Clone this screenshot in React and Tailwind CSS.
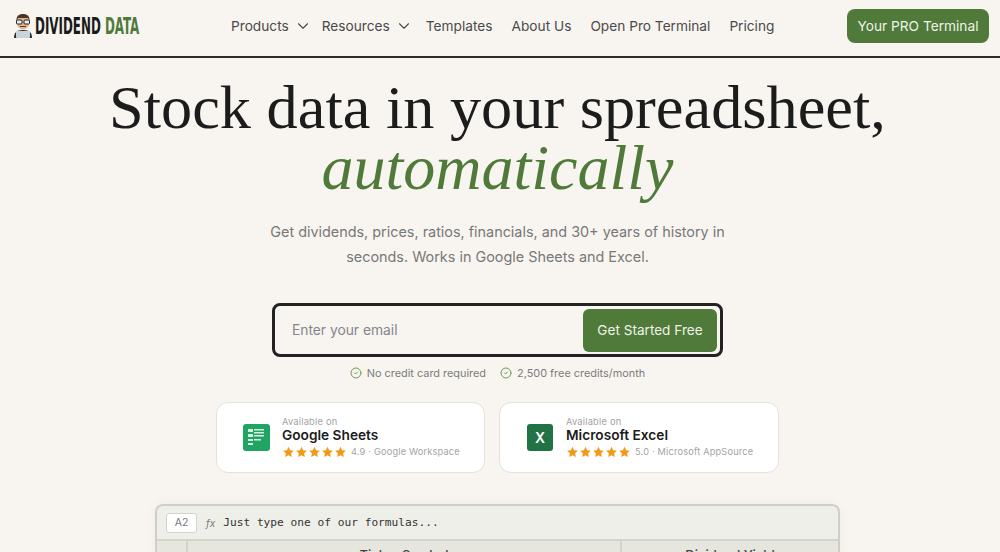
import React from 'react';
import { ChevronDown, CircleCheck } from 'lucide-react';

const Logo = () => (
  <div className="flex items-center gap-[2px]">
    <svg width="20" height="26" viewBox="0 0 20 26" className="shrink-0">
      <path d="M1 25c0-5 2-8 9-8s9 3 9 8z" fill="#2b2b2b" />
      <rect x="3" y="18" width="14" height="7" rx="1" fill="#c9d3dc" />
      <ellipse cx="10" cy="9" rx="6.5" ry="7.5" fill="#e6b48c" />
      <path d="M3.5 8C3 2 7 1 10 1s7 1 6.500 7l-1.500-3H5z" fill="#4a3526" />
      <rect x="3.500" y="7" width="5.500" height="4" rx="1" fill="#e8eef0" stroke="#222" strokeWidth="1" />
      <rect x="11" y="7" width="5.500" height="4" rx="1" fill="#e8eef0" stroke="#222" strokeWidth="1" />
      <path d="M7 13.500h6" stroke="#5a3a28" strokeWidth="1" />
    </svg>
    <span className='font-["DejaVu_Sans_Condensed","Liberation_Sans",sans-serif] text-[23px] font-bold leading-none scale-x-[0.575] origin-left whitespace-nowrap text-[#1a1a1a]'>
      DIVIDEND <span className="text-[#4f7a3a]">DATA</span>
    </span>
  </div>
);

const Stars = () => (
  <span className="flex">
    {[0, 1, 2, 3, 4].map(i => (
      <svg key={i} width="13" height="12" viewBox="0 0 24 24" fill="#f09a1a">
        <path d="M12 1.500l3.200 7 7.600.9-5.600 5.200 1.500 7.500L12 18.300 5.300 22.100l1.500-7.500L1.200 9.400l7.600-.9z" />
      </svg>
    ))}
  </span>
);

const StoreCard = ({ icon, name, rating, width, pad }) => (
  <div className={`${width} ${pad} h-[71px] flex items-center bg-white border border-[#e4e2da] rounded-xl`}>
    {icon}
    <div className="pb-[2px]">
      <p className="text-[9.300px] leading-[12px] text-[#a3a3a3] tracking-[0.2px]">Available on</p>
      <p className="text-[13.700px] leading-[15px] font-semibold text-[#1c1c1c]">{name}</p>
      <div className="flex items-center gap-[4px] mt-[3px]">
        <Stars />
        <span className="text-[9.200px] leading-[12px] text-[#a3a3a3] tracking-[0.2px]">{rating}</span>
      </div>
    </div>
  </div>
);

const SheetsIcon = () => (
  <svg width="27" height="27" viewBox="0 0 27 27" className="mr-[12px]">
    <rect width="27" height="27" rx="3" fill="#1fa463" />
    <g fill="#d9f2e4">
      <rect x="5" y="5" width="5" height="3" />
      <rect x="11" y="5" width="10" height="1.500" />
      <rect x="11" y="8" width="10" height="1.500" />
      <rect x="5" y="10" width="5" height="3" />
      <rect x="11" y="11" width="10" height="1.500" />
      <rect x="5" y="15" width="5" height="2" />
      <rect x="11" y="15" width="7" height="1.500" />
      <rect x="5" y="19" width="5" height="2" />
    </g>
  </svg>
);

const ExcelIcon = () => (
  <div className="w-[26px] h-[27px] mr-[13px] rounded-[3px] bg-[#217346] flex items-center justify-center text-white text-[14px] font-semibold">X</div>
);

export default function App() {
  return (
    <div className='font-["Inter",sans-serif] w-[1000px] h-[552px] overflow-hidden bg-[#f8f5f0]'>
      {/* Nav */}
      <header className="h-[58px] flex items-center pl-[13px] pr-[11px] pb-[4px] border-b-2 border-[#2b2b2b]">
        <div className="w-[218px]"><Logo /></div>
        <nav className="flex items-center text-[13.700px] text-[#4a4a4a] whitespace-nowrap">
          <span>Products</span>
          <ChevronDown size={18} strokeWidth={1.5} className="ml-[5px] mr-[10px]" />
          <span>Resources</span>
          <ChevronDown size={18} strokeWidth={1.5} className="ml-[5px] mr-[13px]" />
          <span className="mr-[19px]">Templates</span>
          <span className="mr-[19px]">About Us</span>
          <span className="mr-[19px]">Open Pro Terminal</span>
          <span>Pricing</span>
        </nav>
        <button className="ml-auto h-[34px] w-[142px] rounded-lg bg-[#4f7a3a] text-[#eef3e8] text-[13.700px]">Your PRO Terminal</button>
      </header>

      {/* Hero */}
      <main className="flex flex-col items-center pr-[5px]">
        <h1 className='font-["Liberation_Serif",serif] text-[62.300px] leading-[61px] mt-[18px] text-[#1c1c1c] text-center whitespace-nowrap'>
          <span className="block">Stock data in your spreadsheet,</span>
          <em className="block text-[64px] leading-[61px] text-[#4f7a3a]">automatically</em>
        </h1>
        <p className="mt-[21px] text-[14.400px] leading-[25px] text-[#787878] text-center">
          Get dividends, prices, ratios, financials, and 30+ years of history in<br />
          seconds. Works in Google Sheets and Excel.
        </p>

        <div className="mt-[34px] w-[451px] h-[54px] flex items-center justify-between pl-[17px] pr-[3px] rounded-lg border-[3px] border-[#222]">
          <span className="text-[13.800px] text-[#85858c]">Enter your email</span>
          <button className="w-[134px] h-[43px] rounded-md bg-[#4f7a3a] text-[#eef3e8] text-[13.600px]">Get Started Free</button>
        </div>

        <div className="mt-[8px] flex items-center gap-[14px] text-[10.900px] text-[#7c7c7c]">
          <span className="flex items-center gap-[5px]"><CircleCheck size={12} className="text-[#6f9a58]" />No credit card required</span>
          <span className="flex items-center gap-[5px]"><CircleCheck size={12} className="text-[#6f9a58]" />2,500 free credits/month</span>
        </div>

        <div className="mt-[21px] flex gap-[14px]">
          <StoreCard width="w-[269px]" pad="pl-[26px]" icon={<SheetsIcon />} name="Google Sheets" rating="4.9 · Google Workspace" />
          <StoreCard width="w-[280px]" pad="pl-[27px]" icon={<ExcelIcon />} name="Microsoft Excel" rating="5.0 · Microsoft AppSource" />
        </div>

        {/* Sheet preview */}
        <div className="mt-[31px] w-[685px] rounded-t-lg border-2 border-b-0 border-[#cfcfc7] bg-[#efefe9] shadow-[0_0_12px_rgba(0,0,0,0.04)]">
          <div className="h-[35px] flex items-center pl-[9px] pt-[1px] border-b-2 border-[#d4d4cc]">
            <div className="w-[31px] h-[20px] flex items-center justify-center bg-white border border-[#d4d4cc] rounded-[3px] text-[10.500px] text-[#777]">A2</div>
            <span className="ml-[9px] text-[10px] italic text-[#777]">fx</span>
            <span className="ml-[8px] text-[11.200px] text-[#333] font-['DejaVu_Sans_Mono',monospace] whitespace-nowrap">Just type one of our formulas...</span>
          </div>
          <div className="h-[30px] flex bg-[#e6e6df] text-[13px] font-medium text-[#444]">
            <div className="w-[31px] border-r-2 border-[#d4d4cc]" />
            <div className="w-[434px] border-r-2 border-[#d4d4cc] pt-[5px] text-center">Ticker Symbol</div>
            <div className="flex-1 pt-[5px] text-center">Dividend Yield</div>
          </div>
        </div>
      </main>
    </div>
  );
}
